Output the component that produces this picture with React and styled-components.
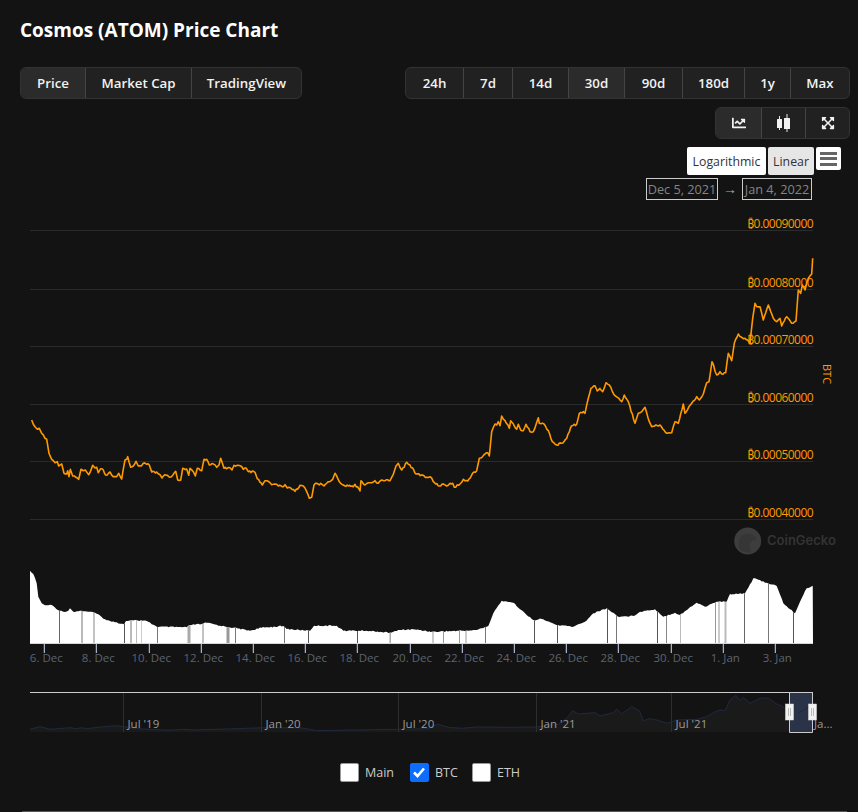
import React from "react";
import styled, { createGlobalStyle } from "styled-components";
import { FaChartLine, FaExpandArrowsAlt } from "react-icons/fa";

const FONT = `"Open Sans", "Noto Sans", "Liberation Sans", sans-serif`;

const GlobalStyle = createGlobalStyle`
  html, body {
    margin: 0;
    background: #131313;
    font-family: ${FONT};
  }
`;

const Page = styled.div`
  width: 858px;
  height: 812px;
  box-sizing: border-box;
  padding: 0 8px 0 20px;
  overflow: hidden;
  display: flex;
  flex-direction: column;
`;

const Title = styled.h2`
  margin: 0;
  height: 67px;
  padding-top: 18px;
  box-sizing: border-box;
  font-size: 19px;
  line-height: 24px;
  font-weight: 700;
  color: #fff;
`;

const TopBar = styled.div`
  display: flex;
  justify-content: space-between;
`;

const Group = styled.div`
  display: flex;
  height: 32px;
  box-sizing: border-box;
  border: 1px solid #333;
  border-radius: 6px;
  background: #212121;
  overflow: hidden;
`;

const GroupButton = styled.div`
  width: ${(p) => p.$w}px;
  box-sizing: border-box;
  display: flex;
  align-items: center;
  justify-content: center;
  font-size: 13.3px;
  font-weight: 600;
  color: #f2f2f2;
  background: ${(p) => (p.$active ? "#2b2b2b" : "transparent")};
  & + & {
    border-left: 1px solid #444;
  }
`;

const IconRow = styled.div`
  display: flex;
  justify-content: flex-end;
  margin-top: 8px;
`;

const ZoomRow = styled.div`
  display: flex;
  justify-content: flex-end;
  align-items: flex-start;
  gap: 2px;
  margin-top: 8px;
  padding-right: 9px;
  height: 30px;
`;

const ScaleButton = styled.div`
  width: ${(p) => p.$w}px;
  height: 28px;
  display: flex;
  align-items: center;
  justify-content: center;
  border-radius: 2px;
  font-size: 12.3px;
  color: #333;
  background: ${(p) => (p.$active ? "#e6e6e6" : "#fff")};
`;

const MenuButton = styled.div`
  width: 25px;
  height: 23px;
  border-radius: 2px;
  background: #fff;
  display: flex;
  flex-direction: column;
  justify-content: center;
  align-items: center;
  gap: 2.5px;
`;

const MenuBar = styled.span`
  width: 17px;
  height: 3px;
  background: #666;
`;

const DateRow = styled.div`
  display: flex;
  justify-content: flex-end;
  align-items: center;
  height: 23px;
  padding-right: 38px;
  font-size: 12.7px;
  color: #858585;
`;

const DateBox = styled.div`
  width: ${(p) => p.$w}px;
  height: 22px;
  box-sizing: border-box;
  border: 1px solid #ccc;
  display: flex;
  align-items: center;
  justify-content: center;
`;

const DateArrow = styled.span`
  width: 24px;
  text-align: center;
  font-size: 14px;
  color: #aaa;
`;

const ChartSvg = styled.svg`
  display: block;
  width: 830px;
  height: 535px;
  flex: none;
`;

const YLabel = styled.text`
  font-size: 12px;
  letter-spacing: -0.55px;
  fill: #ff9900;
  text-anchor: end;
`;

const AxisTitle = styled.text`
  font-size: 11px;
  fill: #ff9900;
`;

const XLabel = styled.text`
  font-size: 11.5px;
  fill: #5c6470;
  text-anchor: middle;
`;

const NavLabel = styled.text`
  font-size: 11.5px;
  fill: #9a9a9a;
`;

const Brand = styled.text`
  font-family: Inter, ${FONT};
  font-size: 13px;
  font-weight: 600;
  fill: #333;
`;

const Legend = styled.div`
  display: flex;
  align-items: center;
  margin-top: 27px;
  padding-left: 319.5px;
  height: 20px;
  flex: none;
`;

const LegendItem = styled.div`
  width: ${(p) => p.$w}px;
  display: flex;
  align-items: center;
  gap: 6.5px;
  font-size: 12.5px;
  color: #ccc;
`;

const CheckBox = styled.span`
  width: 19px;
  height: 19px;
  box-sizing: border-box;
  border-radius: 2px;
  border: 1px solid ${(p) => (p.$checked ? "#0d6efd" : "#999")};
  background: ${(p) => (p.$checked ? "#0d6efd" : "#fff")};
  display: flex;
  align-items: center;
  justify-content: center;
`;

const BottomRule = styled.div`
  margin: 29px 3px 0 2px;
  height: 1px;
  background: #555;
  flex: none;
`;

// traced from the chart, points at 3x
const priceA = [[95,60],[105,80],[112,88],[118,85],[125,100],[135,115],[140,118],[147,160],[155,178],[165,188],[172,185],[176,198],[185,192],[192,220],[200,222],[203,212],[207,230],[211,208],[218,228],[228,232],[236,238],[243,208],[250,212],[256,210],[266,224],[278,196],[285,204],[290,202],[295,218],[302,206],[310,210],[318,226],[330,216],[340,230],[350,230],[356,220],[365,237],[375,180],[380,178],[383,170],[392,202],[400,198],[408,184],[415,198],[424,198],[430,190],[448,195],[455,216],[470,216],[480,224],[486,234],[495,224],[510,232],[527,214],[533,240],[542,240],[548,205],[560,207],[566,226],[570,205],[580,215],[586,228],[592,205],[605,212],[612,178],[620,178],[628,195],[640,192],[650,202],[657,195],[662,175],[672,205],[690,203],[696,210],[702,196],[722,198],[730,208],[738,204],[745,215],[765,217],[772,236],[787,255],[795,242],[805,244],[815,254],[825,252],[835,258],[850,260],[855,254],[862,264],[872,264],[885,274],[897,262]];
const priceB = [[0,316],[10,318],[20,335],[28,355],[35,352],[42,315],[50,310],[58,315],[62,310],[72,318],[85,305],[98,298],[105,280],[118,305],[130,315],[145,318],[160,320],[165,313],[180,333],[183,302],[195,315],[205,308],[215,308],[225,302],[235,310],[245,300],[255,302],[270,302],[280,283],[288,258],[295,250],[305,270],[320,247],[330,255],[348,282],[365,285],[380,292],[390,290],[400,305],[418,318],[430,312],[440,318],[450,310],[458,310],[463,322],[480,312],[490,298],[503,303],[515,285],[530,272],[538,235],[555,222],[563,218],[568,228],[575,155],[585,132],[590,135],[595,125],[600,137],[605,108],[615,122],[628,145],[632,122],[650,148],[655,133],[662,150],[670,152],[678,133],[690,155],[700,155],[715,113],[718,130],[732,132],[745,152],[757,185],[770,195],[785,190],[800,175],[815,137],[830,133],[838,100],[850,95],[855,100],[865,55],[873,25],[885,17],[892,33],[900,25]];
const priceC = [[120,418],[128,425],[138,398],[148,405],[165,437],[180,450],[185,455],[193,435],[205,455],[225,520],[235,490],[245,485],[255,472],[268,515],[275,530],[300,525],[320,550],[335,548],[345,515],[355,520],[370,462],[375,490],[395,460],[410,440],[418,450],[430,432],[440,398],[447,395],[456,335],[470,375],[480,365],[485,372],[497,368],[505,310],[515,332],[523,280],[535,252],[545,262],[555,265],[570,280],[578,205],[585,160],[590,170],[600,170],[610,210],[625,165],[640,205],[650,215],[660,205],[665,228],[680,200],[695,220],[708,213],[715,120],[722,130],[727,105],[735,120],[745,85],[755,72],[758,25]];

const volA = [[90,32],[100,42],[110,70],[115,110],[125,130],[135,136],[155,135],[178,152],[190,155],[205,152],[210,145],[220,155],[245,152],[265,155],[285,158],[315,178],[335,185],[350,187],[372,193],[378,183],[395,180],[440,183],[470,200],[560,202],[570,195],[605,192],[620,188],[660,197],[700,203],[750,212],[785,203],[850,198],[860,207],[930,212],[942,197],[1010,197],[1030,212],[1100,212],[1170,218],[1200,210],[1240,208],[1290,214]];
const volB = [[0,396],[40,394],[100,392],[140,390],[175,378],[190,340],[215,302],[250,308],[290,345],[310,360],[335,357],[380,375],[430,380],[465,365],[490,340],[530,325],[565,350],[610,348],[630,335],[675,328],[700,350],[735,338],[750,345],[800,308],[825,320],[860,305],[890,305],[900,282],[945,280],[970,235],[1010,248],[1040,258],[1060,310],[1095,340],[1110,305],[1130,265],[1148,258],[1148,232]];

const navA = [[90,148],[120,140],[150,148],[210,143],[230,146],[245,143],[260,146],[310,140],[350,137],[385,142],[430,147],[510,151],[550,148],[580,150],[680,147],[790,143],[900,143],[950,152],[1190,148],[1289,146]];
const navB = [[0,140],[25,133],[55,142],[95,145],[140,141],[230,142],[320,141],[385,133],[410,115],[428,92],[445,102],[470,100],[495,98],[510,108],[550,98],[560,88],[575,102],[605,80],[628,92],[640,122],[660,116],[680,120],[710,130],[740,120],[800,118],[830,110],[850,98],[870,90],[885,92],[900,60],[918,46],[930,62],[940,52],[960,70],[990,55],[1015,54],[1040,72],[1055,78],[1075,92],[1105,98],[1125,88],[1148,72]];

const toXY = (pts, ox, oy) => pts.map(([x, y]) => [ox + x / 3, oy + y / 3]);
const line = (pts) => pts.map(([x, y]) => `${x.toFixed(1)},${y.toFixed(1)}`).join(" ");

// fills the traced line with small steps, the data is noisy at hourly level
function roughen(pts, step, amp) {
  const out = [];
  let n = 0;
  pts.forEach(([x, y], i) => {
    out.push([x, y]);
    const next = pts[i + 1];
    if (!next) return;
    const count = Math.floor((next[0] - x) / step);
    for (let k = 1; k < count; k++) {
      n++;
      const t = k / count;
      const noise = Math.sin(n * 12.9898) * 43758.5453;
      const r = (noise - Math.floor(noise) - 0.5) * 2 * amp;
      out.push([x + (next[0] - x) * t, y + (next[1] - y) * t + r]);
    }
  });
  return out;
}

const pricePts = roughen([...toXY(priceA, 0, 400), ...toXY(priceB, 300, 380), ...toXY(priceC, 560, 250)], 1.2, 1);
const volPts = roughen([...toXY(volA, 0, 560), ...toXY(volB, 430, 500)], 1.5, 0.6);
const navPts = [...toXY(navA, 0, 680), ...toXY(navB, 430, 680)];

const gridRows = [
  [230.5, "0.00090000"],
  [289.5, "0.00080000"],
  [346.5, "0.00070000"],
  [404.5, "0.00060000"],
  [461.5, "0.00050000"],
  [519.5, "0.00040000"],
];

const xTicks = [
  [44.3, "6. Dec"], [96.3, "8. Dec"], [149.3, "10. Dec"], [201.3, "12. Dec"],
  [253.3, "14. Dec"], [305.3, "16. Dec"], [357.3, "18. Dec"], [410.3, "20. Dec"],
  [462.3, "22. Dec"], [514.3, "24. Dec"], [566.3, "26. Dec"], [618.3, "28. Dec"],
  [671.3, "30. Dec"], [723.3, "1. Jan"], [775.3, "3. Jan"],
];

// gaps in the volume series: x, width, colour
const volGaps = [
  [59, 1, "#666"], [81.5, 1, "#777"], [93.5, 1, "#888"], [124, 1, "#555"], [130.5, 1, "#777"],
  [136, 1, "#bbb"], [141, 1, "#ccc"], [157, 1, "#777"], [187.5, 3, "#aaa"], [202.5, 1, "#888"],
  [226.5, 3, "#999"], [235, 1, "#777"], [284, 1, "#777"], [308, 1, "#555"], [357, 1, "#555"],
  [389.5, 1.5, "#aaa"], [432.5, 1, "#999"], [443, 1, "#999"], [459, 1, "#999"], [465.5, 1, "#999"],
  [485, 1, "#777"], [534, 1, "#555"], [557, 1, "#555"], [607, 1, "#555"], [616, 1, "#777"],
  [657, 1, "#555"], [666, 1, "#888"], [680, 1, "#bbb"], [715, 1, "#999"], [718.5, 1, "#999"],
  [724.5, 2, "#bbb"], [744, 1, "#666"], [768, 1, "#777"], [793, 1, "#555"],
];

const navGrid = [[123.5, "Jul '19"], [261.5, "Jan '20"], [398.5, "Jul '20"], [536.5, "Jan '21"], [671.5, "Jul '21"]];

function CandleIcon() {
  return (
    <svg width="13" height="18" viewBox="0 0 13 18">
      <path d="M2.5 2v14M10 0v18" stroke="#e8e8e8" strokeWidth="1" />
      <rect x="0" y="5" width="5" height="9" rx="0.5" fill="#f2f2f2" />
      <rect x="7" y="4" width="6" height="11" rx="0.5" fill="#f2f2f2" />
    </svg>
  );
}

function Chart() {
  const navArea = `30,732 ${line(navPts)} 813,732`;
  const volArea = `30,643 ${line(volPts)} 813,643`;
  return (
    <ChartSvg viewBox="20 200 830 535">
      <defs>
        <clipPath id="vol-clip">
          <polygon points={volArea} />
        </clipPath>
      </defs>
      {gridRows.map(([y]) => (
        <line key={y} x1="30" x2="813" y1={y} y2={y} stroke="#2b2b2b" />
      ))}
      <polyline points={line(pricePts)} fill="none" stroke="#ff9900" strokeWidth="1.6" strokeLinejoin="round" />
      {gridRows.map(([y, label]) => (
        <YLabel key={label} x="813" y={y - 2.5}>₿{label}</YLabel>
      ))}
      <AxisTitle transform="translate(823 364) rotate(90)">BTC</AxisTitle>

      <circle cx="747.7" cy="541" r="13.5" fill="#3d3d3d" />
      <path d="M739 548c-1-6 0-12 6-14 5-1 10 1 12 5l-5 2c-2 1-3 3-2 6l1 5c-4 1-10 0-12-4z" fill="#363636" />
      <Brand x="767" y="545">CoinGecko</Brand>

      <polygon points={volArea} fill="#fff" />
      <g clipPath="url(#vol-clip)">
        {volGaps.map(([x, w, c]) => (
          <rect key={x} x={x} y="560" width={w} height="83" fill={c} />
        ))}
      </g>
      <line x1="30" x2="813" y1="643.5" y2="643.5" stroke="#ccd6eb" />
      {xTicks.map(([x, label]) => (
        <g key={label}>
          <line x1={x} x2={x} y1="643" y2="653" stroke="#ccd6eb" />
          <XLabel x={x + 2} y="662">{label}</XLabel>
        </g>
      ))}

      <polygon points={navArea} fill="#1a1a1a" />
      {navGrid.map(([x]) => (
        <line key={x} x1={x} x2={x} y1="692" y2="732" stroke="#2e2e2e" />
      ))}
      <polyline points={line(navPts)} fill="none" stroke="#1f2a40" strokeWidth="1" />
      {navGrid.map(([x, label]) => (
        <NavLabel key={label} x={x + 4} y="728">{label}</NavLabel>
      ))}
      <NavLabel x="814" y="728">Ja...</NavLabel>

      <rect x="789.7" y="692" width="23" height="40" fill="#2a3347" />
      <polyline points={line(navPts.filter(([x]) => x >= 789))} fill="none" stroke="#1f2a40" strokeWidth="1" />
      <path d="M30 692.5H813M789.5 692V732.5H812.5V692" fill="none" stroke="#ccc" />
      {[785.5, 808.5].map((x) => (
        <g key={x}>
          <rect x={x} y="704" width="8" height="16" fill="#f2f2f2" stroke="#ddd" strokeWidth="0.5" />
          <path d={`M${x + 3} 708V716M${x + 5} 708V716`} stroke="#bbb" />
        </g>
      ))}
    </ChartSvg>
  );
}

const ranges = [["24h", 57], ["7d", 49], ["14d", 56], ["30d", 56], ["90d", 58], ["180d", 62], ["1y", 46], ["Max", 59]];

export default function App() {
  return (
    <Page>
      <GlobalStyle />
      <Title>Cosmos (ATOM) Price Chart</Title>
      <TopBar>
        <Group>
          <GroupButton $w={64} $active>Price</GroupButton>
          <GroupButton $w={106}>Market Cap</GroupButton>
          <GroupButton $w={110}>TradingView</GroupButton>
        </Group>
        <Group>
          {ranges.map(([label, w]) => (
            <GroupButton key={label} $w={w} $active={label === "30d"}>{label}</GroupButton>
          ))}
        </Group>
      </TopBar>
      <IconRow>
        <Group>
          <GroupButton $w={45} $active><FaChartLine size={14} color="#f2f2f2" /></GroupButton>
          <GroupButton $w={44}><CandleIcon /></GroupButton>
          <GroupButton $w={44}><FaExpandArrowsAlt size={14} color="#f2f2f2" /></GroupButton>
        </Group>
      </IconRow>
      <ZoomRow>
        <ScaleButton $w={79}>Logarithmic</ScaleButton>
        <ScaleButton $w={46} $active>Linear</ScaleButton>
        <MenuButton>
          <MenuBar />
          <MenuBar />
          <MenuBar />
        </MenuButton>
      </ZoomRow>
      <DateRow>
        <DateBox $w={72}>Dec 5, 2021</DateBox>
        <DateArrow>→</DateArrow>
        <DateBox $w={70}>Jan 4, 2022</DateBox>
      </DateRow>
      <Chart />
      <Legend>
        <LegendItem $w={70}>
          <CheckBox />
          Main
        </LegendItem>
        <LegendItem $w={62}>
          <CheckBox $checked>
            <svg width="14" height="12" viewBox="0 0 14 12">
              <path d="M2 6.5l3.5 3.5L12 2.5" fill="none" stroke="#fff" strokeWidth="2.6" />
            </svg>
          </CheckBox>
          BTC
        </LegendItem>
        <LegendItem $w={50}>
          <CheckBox />
          ETH
        </LegendItem>
      </Legend>
      <BottomRule />
    </Page>
  );
}
